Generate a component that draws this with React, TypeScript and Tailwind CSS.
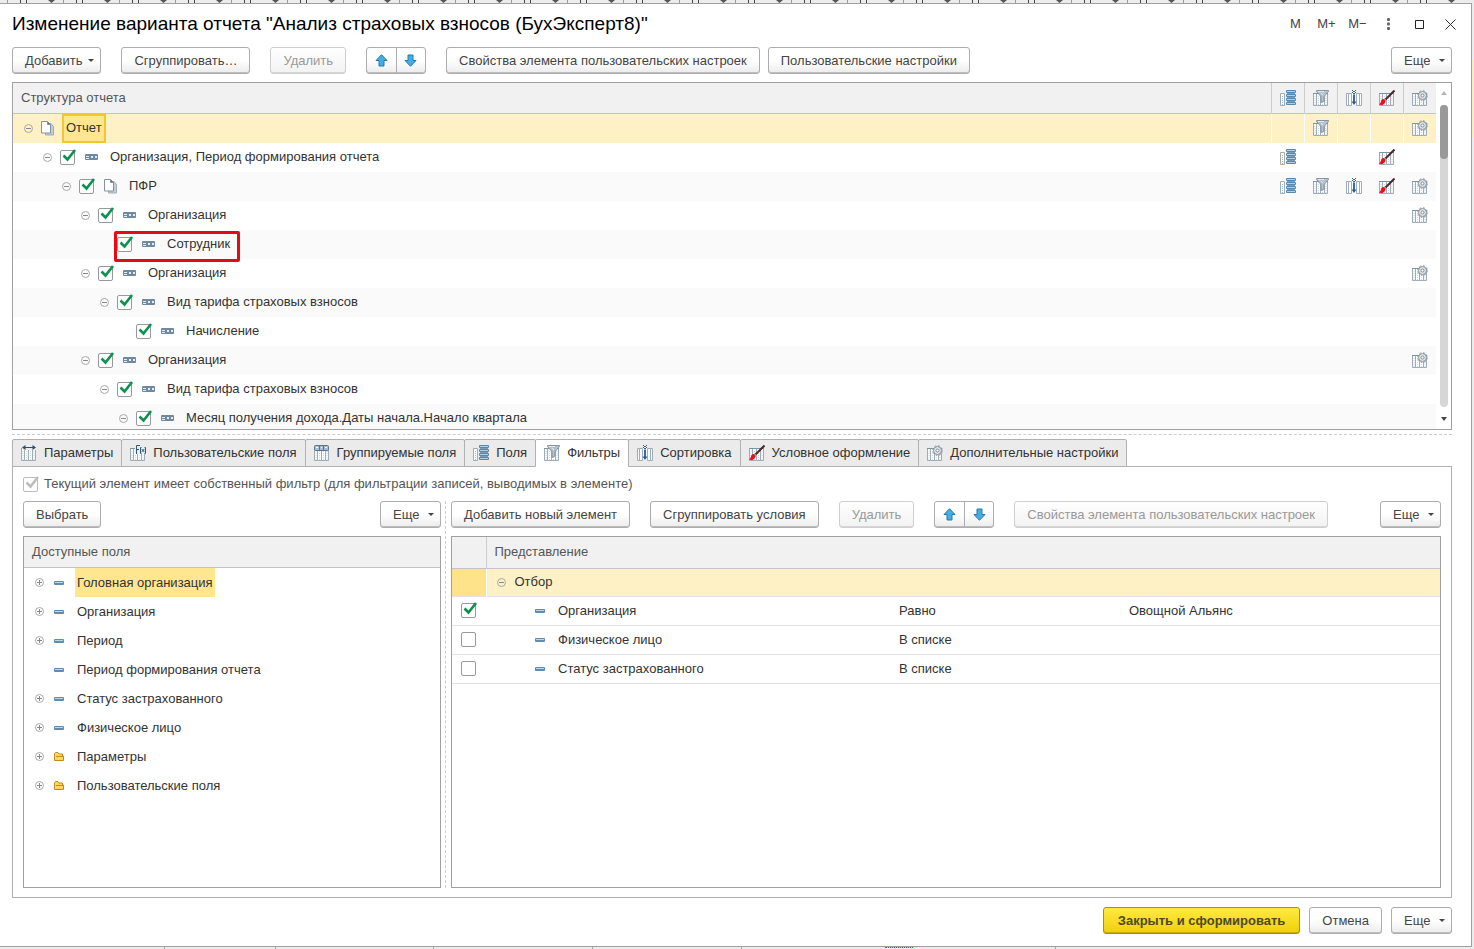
import React, { useState } from 'react';
import clsx from 'clsx';

type IconProps = { className?: string };

const Columns = () => (
  <>
    <path d="M0.5 3.5h3v12h-3zM3.5 3.5h4v12h-4zM7.5 3.5h4v12h-4zM11.5 3.5h3v12h-3z" fill="#fbfcfd" stroke="#9eadba" />
    <path d="M0 3.5h15" stroke="#8193a3" />
    <path d="M2 6v9M5.5 6v9M9.5 6v9M13 6v9" stroke="#cfd7de" strokeDasharray="1 1" />
  </>
);

const Svg = ({ children, className }: { children: React.ReactNode; className?: string }) => (
  <svg width="16" height="16" viewBox="0 0 16 16" fill="none" className={clsx('shrink-0', className)} aria-hidden="true">
    {children}
  </svg>
);

const FieldsIcon = ({ className }: IconProps) => (
  <Svg className={className}>
    <path d="M0.5 3.5h4v12h-4z" fill="#fbfcfd" stroke="#9eadba" />
    <path d="M2.5 6v9" stroke="#a9b6c2" strokeDasharray="1 1" />
    <path d="M7 3h8v12h-8z" fill="#7c9db5" />
    {[0, 4, 8, 12].map((y) => (
      <g key={y}>
        <rect x="6" y={y} width="10" height="3" rx="1" fill="#5888ad" />
        <path d={`M7 ${y + 1.5}h8`} stroke="#b0d0e5" />
      </g>
    ))}
  </Svg>
);

const FilterIcon = ({ className }: IconProps) => (
  <Svg className={className}>
    <Columns />
    <path d="M3.5 0.5h12v1l-4.500 5v4.500l-3 1.500v-6l-4.500-5z" fill="#b4c2cf" stroke="#8494a3" />
    <path d="M5 1.5h6M8.5 3l1 2" stroke="#e3eaf0" />
  </Svg>
);

const SortIcon = ({ className }: IconProps) => (
  <Svg className={className}>
    <path d="M0.5 3.5h2v12h-2zM2.5 3.5h3v12h-3zM10.5 3.5h3v12h-3zM13.5 3.5h2v12h-2z" fill="#fbfcfd" stroke="#9eadba" />
    <path d="M8 0v15" stroke="#fff" strokeWidth="4" />
    <path d="M6 0.5h1M9 0.5h1M7 1.5h2M6 2.5h1M9 2.5h1M7 3.5h2" stroke="#2d5c94" />
    <path d="M8 4.5v9" stroke="#3c6ba2" strokeWidth="2" />
    <path d="M5.5 11.5h5L8 15z" fill="#2d5c94" />
  </Svg>
);

const BrushIcon = ({ className }: IconProps) => (
  <Svg className={className}>
    <Columns />
    <path d="M15.5 0.5L6.5 9.5" stroke="#45292a" strokeWidth="2" />
    <path d="M6.500 10c-1.500-1.200-3-1.200-4 0c-0.600 1-0.400 2-1 2.800c-0.500 0.900-1 1.200-1.500 1.700c1.500 0.800 4 0.600 5.300-0.800c1-1 1.500-2.300 1.200-3.700z" fill="#e3121b" />
  </Svg>
);

const GearIcon = ({ className }: IconProps) => (
  <Svg className={className}>
    <Columns />
    <circle cx="10.5" cy="5.5" r="4" fill="#dfe4e8" stroke="#8a949d" />
    <circle cx="10.5" cy="5.5" r="4.8" stroke="#8a949d" strokeDasharray="1.9 1.87" />
    <circle cx="10.5" cy="5.5" r="1.5" fill="#fff" stroke="#7e8a95" />
  </Svg>
);

const ParamsIcon = ({ className }: IconProps) => (
  <Svg className={className}>
    <Columns />
    <path d="M1 0h14v5h-14z" fill="#ebebeb" />
    <path d="M2 2.5h12" stroke="#2f4e68" />
    <path d="M4.5 0L1 2.5L4.5 5zM11.5 0L15 2.5L11.5 5z" fill="#2f4e68" />
  </Svg>
);

const FormulaIcon = ({ className }: IconProps) => (
  <Svg className={className}>
    <Columns />
    <path d="M5 0h11v9h-11z" fill="#ebebeb" />
    <path d="M6.5 9V0.5H10M6.5 4.5H9M11.5 2.5h-1v6h1M14.5 2.5h1v6h-1M11.7 4l2.6 3M14.3 4l-2.6 3" stroke="#2f5878" />
  </Svg>
);

const GroupedIcon = ({ className }: IconProps) => (
  <Svg className={className}>
    <Columns />
    <rect x="0.5" y="0.5" width="14" height="5" rx="1" fill="#a7bdcf" stroke="#5c7589" />
    <path d="M5.5 1v4M9.5 1v4" stroke="#5c7589" />
    <path d="M2 2.5h2M7 2.5h1M11 2.5h2" stroke="#fff" />
  </Svg>
);

const PagesIcon = () => (
  <svg width="14" height="15" viewBox="0 0 14 15" fill="none" aria-hidden="true">
    <path d="M4.5 2.5h5.500l2.500 3v8.500h-8z" fill="#c4ccd3" stroke="#a3adb6" />
    <path d="M0.5 0.5h6l3 3v8.500h-9z" fill="#fff" stroke="#7f93a5" />
    <path d="M6.5 0.5v3h3" fill="#5e7890" stroke="#7f93a5" />
  </svg>
);

const GroupIcon = () => (
  <svg width="13" height="6" viewBox="0 0 13 6" fill="none" aria-hidden="true">
    <rect width="13" height="6" rx="1" fill="#71899f" />
    <path d="M1 2h3v1H1zM1 4h3v1H1zM6 2h2v2H6zM10 2h2v2h-2z" fill="#e3edf5" />
  </svg>
);

const FieldIcon = () => (
  <svg width="10" height="4" viewBox="0 0 10 4" aria-hidden="true">
    <rect width="10" height="4" rx="1" fill="#5f8caf" />
    <path d="M1 1h8v1H1z" fill="#bad6e9" />
  </svg>
);

const FolderIcon = () => (
  <svg width="10" height="9" viewBox="0 0 10 9" aria-hidden="true">
    <path d="M0.5 8.500V1.500l1-1h2.500l1 1.500h3.500v2h1v4.500z" fill="#ffd75e" stroke="#c28b1c" />
    <path d="M2 4.5h7" stroke="#c28b1c" />
  </svg>
);

const ArrowIcon = ({ down }: { down?: boolean }) => (
  <svg width="13" height="13" viewBox="0 0 13 13" className={clsx(down && 'rotate-180')} aria-hidden="true">
    <path d="M6.5 0.7L12 6.5H9V12H4V6.5H1z" fill="#41aee6" stroke="#2a78a6" strokeLinejoin="round" />
  </svg>
);

const Expander = ({ open }: { open?: boolean }) => (
  <button type="button" aria-label={open ? 'Свернуть' : 'Развернуть'} className="block">
    <svg width="9" height="9" viewBox="0 0 9 9" fill="none" className="block">
      <circle cx="4.5" cy="4.5" r="4" stroke="#a8a8a8" />
      <path d={open ? 'M2 4.5h5' : 'M2 4.5h5M4.5 2v5'} stroke="#888" />
    </svg>
  </button>
);

const CheckBox = ({ label, checked, disabled, id }: { label?: string; checked: boolean; disabled?: boolean; id?: string }) => {
  const [on, setOn] = useState(checked);
  return (
    <span className="relative block size-[15px] shrink-0">
      <input
        id={id}
        type="checkbox"
        aria-label={label}
        checked={on}
        disabled={disabled}
        onChange={() => setOn(!on)}
        className="block size-[15px] appearance-none rounded-xs border border-[#999] bg-white disabled:border-[#bbb]"
      />
      {on && (
        <svg width="15" height="13" viewBox="0 0 15 13" fill="none" className="pointer-events-none absolute -top-px left-0.5">
          <path d="M1.5 6.5L5.5 10.5L13 1" stroke={disabled ? '#bdbdbd' : '#0b9150'} strokeWidth="2.6" />
        </svg>
      )}
    </span>
  );
};

type ButtonProps = {
  children: React.ReactNode;
  disabled?: boolean;
  primary?: boolean;
  menu?: boolean;
};

const Button = ({ children, disabled, primary, menu }: ButtonProps) => (
  <button
    type="button"
    disabled={disabled}
    className={clsx(
      'flex h-[27px] shrink-0 items-center rounded-[3px] border bg-linear-to-b whitespace-nowrap',
      menu ? 'min-w-[61px] justify-between gap-1.5 pr-1.5 pl-3' : primary ? 'px-3.5' : 'px-3',
      primary
        ? 'border-[#a8920a] from-[#ffea3c] to-[#f0cf00] font-bold text-[#4d4a1c] shadow-[inset_0_-1px_#c9ae00]'
        : disabled
          ? 'border-[#cfcfcf] from-white to-[#f2f2f2] text-[#999] shadow-[inset_0_-1px_#d6d6d6]'
          : 'border-[#adadad] from-white from-50% to-[#ececec] text-[#444] shadow-[inset_0_-1px_#bdbdbd]'
    )}
  >
    {children}
    {menu && (
      <svg width="6" height="3" viewBox="0 0 6 3" aria-hidden="true">
        <path d="M0 0h6L3 3z" fill="#444" />
      </svg>
    )}
  </button>
);

const MoveButtons = () => (
  <div className="flex h-[27px] w-[60px] shrink-0 rounded-[3px] border border-[#adadad] bg-linear-to-b from-white from-50% to-[#ececec] shadow-[inset_0_-1px_#bdbdbd]">
    <button type="button" aria-label="Вверх" className="flex flex-1 items-center justify-center border-r border-[#adadad]">
      <ArrowIcon />
    </button>
    <button type="button" aria-label="Вниз" className="flex flex-1 items-center justify-center">
      <ArrowIcon down />
    </button>
  </div>
);

const markColumns = [
  { key: 'fields', title: 'Поля', Icon: FieldsIcon },
  { key: 'filter', title: 'Фильтры', Icon: FilterIcon },
  { key: 'sort', title: 'Сортировка', Icon: SortIcon },
  { key: 'style', title: 'Условное оформление', Icon: BrushIcon },
  { key: 'extra', title: 'Дополнительные настройки', Icon: GearIcon }
];

type StructureRow = {
  label: string;
  level: number;
  pages?: boolean;
  leaf?: boolean;
  marks?: string[];
  outlined?: boolean;
};

const structure: StructureRow[] = [
  { label: 'Отчет', level: 0, pages: true, marks: ['filter', 'extra'] },
  { label: 'Организация, Период формирования отчета', level: 1, marks: ['fields', 'style'] },
  { label: 'ПФР', level: 2, pages: true, marks: ['fields', 'filter', 'sort', 'style', 'extra'] },
  { label: 'Организация', level: 3, marks: ['extra'] },
  { label: 'Сотрудник', level: 4, leaf: true, outlined: true },
  { label: 'Организация', level: 3, marks: ['extra'] },
  { label: 'Вид тарифа страховых взносов', level: 4 },
  { label: 'Начисление', level: 5, leaf: true },
  { label: 'Организация', level: 3, marks: ['extra'] },
  { label: 'Вид тарифа страховых взносов', level: 4 },
  { label: 'Месяц получения дохода.Даты начала.Начало квартала', level: 5 }
];

const tabs = [
  { title: 'Параметры', Icon: ParamsIcon },
  { title: 'Пользовательские поля', Icon: FormulaIcon },
  { title: 'Группируемые поля', Icon: GroupedIcon },
  { title: 'Поля', Icon: FieldsIcon },
  { title: 'Фильтры', Icon: FilterIcon },
  { title: 'Сортировка', Icon: SortIcon },
  { title: 'Условное оформление', Icon: BrushIcon },
  { title: 'Дополнительные настройки', Icon: GearIcon }
];

const availableFields = [
  { label: 'Головная организация', expandable: true },
  { label: 'Организация', expandable: true },
  { label: 'Период', expandable: true },
  { label: 'Период формирования отчета', expandable: false },
  { label: 'Статус застрахованного', expandable: true },
  { label: 'Физическое лицо', expandable: true },
  { label: 'Параметры', expandable: true, folder: true },
  { label: 'Пользовательские поля', expandable: true, folder: true }
];

const filters = [
  { field: 'Организация', condition: 'Равно', value: 'Овощной Альянс', checked: true },
  { field: 'Физическое лицо', condition: 'В списке', value: '', checked: false },
  { field: 'Статус застрахованного', condition: 'В списке', value: '', checked: false }
];

const StructureTable = () => (
  <div className="flex h-[348px] shrink-0 overflow-hidden border border-[#a0a0a0]">
    <div className="min-w-0 flex-1">
      <table className="w-full table-fixed border-collapse">
        <thead>
          <tr className="h-[30px] border-b border-[#c4c4c4] bg-[#f1f1f1]">
            <th className="pl-2 text-left font-normal text-[#555]">Структура отчета</th>
            {markColumns.map(({ key, title, Icon }) => (
              <th key={key} title={title} className="w-[33px] border-l border-[#cdcdcd]">
                <Icon className="mx-auto" />
              </th>
            ))}
          </tr>
        </thead>
        <tbody>
          {structure.map((row, index) => (
            <tr
              key={index}
              className={clsx('h-[29px]', index === 0 ? 'bg-[#fdf1c5]' : index % 2 === 0 ? 'bg-[#fafafa]' : 'bg-white')}
            >
              <td className="p-0">
                <div className="flex h-[29px] items-center" style={{ paddingLeft: 11 + row.level * 19 }}>
                  <span className="w-[17px] shrink-0">{!row.leaf && <Expander open />}</span>
                  <div className="relative flex h-full items-center">
                    {row.level > 0 && (
                      <span className="w-[25px] shrink-0">
                        <CheckBox checked label={row.label} />
                      </span>
                    )}
                    <span className="w-[21px] shrink-0">{row.pages ? <PagesIcon /> : <GroupIcon />}</span>
                    <span
                      className={clsx(
                        'flex h-full items-center border-2 px-0.5 whitespace-nowrap',
                        index === 0 ? 'border-[#f2c832] bg-[#ffe68f]' : 'border-transparent'
                      )}
                    >
                      {row.label}
                    </span>
                    {row.outlined && (
                      <span className="pointer-events-none absolute top-px -right-1.5 -bottom-[3px] -left-[3px] z-10 rounded-xs border-3 border-[#e80a12]" />
                    )}
                  </div>
                </div>
              </td>
              {markColumns.map(({ key, Icon }) => (
                <td key={key} className={clsx('p-0', index === 0 && 'border-l border-white')}>
                  {row.marks?.includes(key) && <Icon className="mx-auto" />}
                </td>
              ))}
            </tr>
          ))}
        </tbody>
      </table>
    </div>
    <div className="flex w-[15px] shrink-0 flex-col items-center bg-white pt-2 pb-2">
      <svg width="6" height="4" viewBox="0 0 6 4" aria-hidden="true">
        <path d="M0 4h6L3 0z" fill="#b5b5b5" />
      </svg>
      <div className="my-2.5 w-2 flex-1 rounded-full bg-[#d6d6d6]">
        <div className="h-[54px] rounded-full bg-[#999]" />
      </div>
      <svg width="6" height="4" viewBox="0 0 6 4" aria-hidden="true">
        <path d="M0 0h6L3 4z" fill="#444" />
      </svg>
    </div>
  </div>
);

const AvailableFields = () => (
  <section className="flex w-[418px] shrink-0 flex-col">
    <div className="flex justify-between">
      <Button>Выбрать</Button>
      <Button menu>Еще</Button>
    </div>
    <div className="mt-2 flex-1 border border-[#a0a0a0]">
      <h2 className="flex h-[31px] items-center border-b border-[#c4c4c4] bg-[#f1f1f1] px-2 text-[#555]">Доступные поля</h2>
      <ul>
        {availableFields.map((field, index) => (
          <li key={field.label} className="flex h-[29px] items-center pl-[11px]">
            <span className="w-[19px] shrink-0">{field.expandable && <Expander />}</span>
            <span className="w-[21px] shrink-0">{field.folder ? <FolderIcon /> : <FieldIcon />}</span>
            <span className={clsx('flex h-full items-center px-0.5', index === 0 && 'bg-[#ffe68f]')}>{field.label}</span>
          </li>
        ))}
      </ul>
    </div>
  </section>
);

const FilterList = () => (
  <section className="flex min-w-0 flex-1 flex-col">
    <div className="flex items-center gap-5">
      <Button>Добавить новый элемент</Button>
      <Button>Сгруппировать условия</Button>
      <Button disabled>Удалить</Button>
      <MoveButtons />
      <Button disabled>Свойства элемента пользовательских настроек</Button>
      <div className="ml-auto">
        <Button menu>Еще</Button>
      </div>
    </div>
    <div className="mt-2 flex-1 border border-[#a0a0a0]">
      <table className="w-full table-fixed border-collapse">
        <colgroup>
          <col className="w-[34px]" />
          <col className="w-[407px]" />
          <col className="w-[230px]" />
          <col />
        </colgroup>
        <thead>
          <tr className="h-[31px] border-b border-[#c4c4c4] bg-[#f1f1f1] text-[#555]">
            <th className="border-r border-[#cdcdcd]" />
            <th colSpan={3} className="pl-2 text-left font-normal">
              Представление
            </th>
          </tr>
        </thead>
        <tbody>
          <tr className="h-7 border-b border-[#e2e2e2] bg-[#fdf1c5]">
            <td className="border-r border-white bg-[#ffe38a]" />
            <td colSpan={3} className="p-0">
              <div className="flex items-center pl-2.5">
                <span className="w-[18px]">
                  <Expander open />
                </span>
                Отбор
              </div>
            </td>
          </tr>
          {filters.map((filter) => (
            <tr key={filter.field} className="h-[29px] border-b border-[#e2e2e2]">
              <td className="p-0 pl-[9px]">
                <CheckBox checked={filter.checked} label={filter.field} />
              </td>
              <td className="p-0">
                <div className="flex items-center pl-[49px]">
                  <span className="w-[23px]">
                    <FieldIcon />
                  </span>
                  {filter.field}
                </div>
              </td>
              <td className="p-0 pl-1.5">{filter.condition}</td>
              <td className="p-0 pl-1.5">{filter.value}</td>
            </tr>
          ))}
        </tbody>
      </table>
    </div>
  </section>
);

const TitleBar = () => (
  <header className="mb-[3px] flex h-10 shrink-0 items-center pr-[5px] pl-3">
    <h1 className="flex-1 text-[19px] whitespace-nowrap text-black">
      Изменение варианта отчета "Анализ страховых взносов (БухЭксперт8)"
    </h1>
    {['M', 'M+', 'M−'].map((label) => (
      <button key={label} type="button" className="w-[31px] text-center text-[#444]">
        {label}
      </button>
    ))}
    <button type="button" aria-label="Меню" className="flex w-[31px] justify-center">
      <svg width="3" height="12" viewBox="0 0 3 12" fill="#666">
        <rect width="3" height="3" rx="1" />
        <rect y="4.5" width="3" height="3" rx="1" />
        <rect y="9" width="3" height="3" rx="1" />
      </svg>
    </button>
    <button type="button" aria-label="Развернуть окно" className="flex w-[31px] justify-center">
      <svg width="9" height="9" viewBox="0 0 9 9" fill="none">
        <path d="M0.5 0.5h8v8h-8z" stroke="#222" />
      </svg>
    </button>
    <button type="button" aria-label="Закрыть" className="flex w-[31px] justify-center">
      <svg width="11" height="11" viewBox="0 0 11 11" fill="none">
        <path d="M0.5 0.5l10 10M10.5 0.5l-10 10" stroke="#333" />
      </svg>
    </button>
  </header>
);

const App = () => {
  const [activeTab, setActiveTab] = useState('Фильтры');

  return (
    <div className="flex min-h-screen flex-col bg-[#ececec] font-['Liberation_Sans',Arial,sans-serif] text-[13px] leading-4 text-[#333]">
      {/* Sheet header behind the dialog */}
      <div className="flex h-[3px] shrink-0 overflow-hidden pl-[7px]" aria-hidden="true">
        {Array.from({ length: 26 }, (_, index) => (
          <div key={index} className="flex h-[3px] w-14 shrink-0 items-start justify-between border-l border-[#999] pr-2 pl-3">
            <svg width="8" height="3" viewBox="0 0 8 3" className="shrink-0">
              <path d="M0 0h1v3H0zM6 0h1v3H6z" fill="#444" />
            </svg>
            <svg width="7" height="3" viewBox="0 0 7 3" className="shrink-0">
              <path d="M0 0h7L3.5 3z" fill="#555" />
            </svg>
          </div>
        ))}
      </div>

      <div className="flex flex-1">
        <main className="flex min-w-0 flex-1 flex-col border-t border-r border-b border-[#a0a0a0] bg-white">
          <TitleBar />

          <div className="flex flex-1 flex-col pr-[19px] pb-3 pl-3">
            <div className="flex shrink-0 items-center gap-5">
              <Button menu>Добавить</Button>
              <Button>Сгруппировать…</Button>
              <Button disabled>Удалить</Button>
              <MoveButtons />
              <div className="flex gap-2">
                <Button>Свойства элемента пользовательских настроек</Button>
                <Button>Пользовательские настройки</Button>
              </div>
              <div className="ml-auto">
                <Button menu>Еще</Button>
              </div>
            </div>

            <div className="mt-2 flex flex-col">
              <StructureTable />
            </div>
            <div className="my-1 border-t border-dashed border-[#cdcdcd]" />

            <div role="tablist" className="flex shrink-0">
              {tabs.map(({ title, Icon }) => (
                <button
                  key={title}
                  type="button"
                  role="tab"
                  aria-selected={title === activeTab}
                  onClick={() => setActiveTab(title)}
                  className={clsx(
                    'relative -mr-px flex h-7 items-center gap-[7px] rounded-t-xs border border-[#b0b0b0] px-2 whitespace-nowrap',
                    title === activeTab ? 'border-b-white bg-white' : 'bg-[#ebebeb]'
                  )}
                >
                  <Icon />
                  {title}
                </button>
              ))}
            </div>

            <div role="tabpanel" className="-mt-px flex flex-1 flex-col border border-[#b0b0b0] px-2.5 pt-[9px] pb-[9px]">
              <div className="flex items-center gap-1.5">
                <CheckBox id="own-filter" checked disabled />
                <label htmlFor="own-filter" className="text-[#555]">
                  Текущий элемент имеет собственный фильтр (для фильтрации записей, выводимых в элементе)
                </label>
              </div>
              <div className="mt-[9px] flex flex-1">
                <AvailableFields />
                <div className="mr-[5px] ml-1 border-l border-dashed border-[#cdcdcd]" />
                <FilterList />
              </div>
            </div>

            <footer className="mt-[9px] flex shrink-0 justify-end gap-[9px]">
              <Button primary>Закрыть и сформировать</Button>
              <Button>Отмена</Button>
              <Button menu>Еще</Button>
            </footer>
          </div>
        </main>
        <div className="w-0.5 shrink-0 pt-[57px]" aria-hidden="true">
          <div className="h-[77px] bg-[#f5ecc8]" />
        </div>
      </div>

      {/* Sheet cells under the dialog */}
      <div className="flex h-0.5 shrink-0" aria-hidden="true">
        <div className="w-[165px] border-r border-[#aaa]" />
        <div className="w-[111px] border-r border-[#aaa]" />
        <div className="w-[158px] border-r border-[#aaa]" />
        <div className="w-[159px] border-r border-[#aaa]" />
        <div className="w-[149px] border-r border-[#aaa]" />
        <div className="flex w-[314px] justify-center border-r border-[#aaa]">
          <div className="w-7 border-t border-dotted border-[#d33]" />
        </div>
      </div>
    </div>
  );
};

export default App;
